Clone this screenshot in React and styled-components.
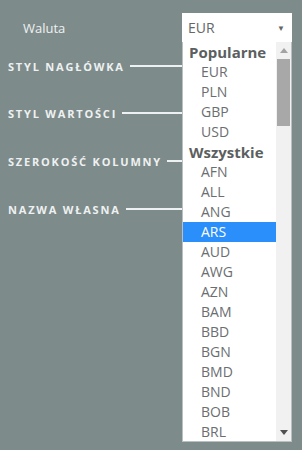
import React from "react";
import styled, { createGlobalStyle } from "styled-components";

const GlobalStyle = createGlobalStyle`
  html, body {
    margin: 0;
    padding: 0;
    background: #7e8b8b;
  }
  body {
    font-family: "Open Sans", "Liberation Sans", sans-serif;
  }
`;

const Page = styled.div`
  position: relative;
  width: 302px;
  height: 450px;
  overflow: hidden;
  background: #7e8b8b;
`;

const FieldRow = styled.div`
  display: flex;
  align-items: center;
  padding: 13px 0 0 23px;
  height: 29px;
`;

const FieldLabel = styled.div`
  width: 159px;
  font-size: 13px;
  color: #eef1f1;
`;

const Select = styled.div`
  box-sizing: border-box;
  width: 110px;
  height: 29px;
  background: #fff;
  display: flex;
  align-items: center;
  justify-content: space-between;
  padding: 0 7px 0 6px;
  font-size: 14px;
  color: #666;
`;

const Caret = styled.span`
  font-size: 8px;
  color: #666;
`;

const Notes = styled.div`
  display: flex;
  flex-direction: column;
  width: 182px;
`;

const Note = styled.div`
  display: flex;
  align-items: center;
  margin-top: ${(p) => p.$top}px;
  height: 14px;
`;

const NoteText = styled.span`
  padding-left: 8px;
  font-size: 11px;
  font-weight: 700;
  letter-spacing: 1.8px;
  color: #eef1f1;
  white-space: nowrap;
`;

const NoteLine = styled.span`
  flex: 1;
  height: 2px;
  margin-left: 5px;
  background: #eef1f1;
`;

const Dropdown = styled.div`
  position: absolute;
  left: 182px;
  top: 42px;
  width: 110px;
  height: 400px;
  box-sizing: border-box;
  display: flex;
  background: #fff;
  border: 1px solid #b9c0c0;
  border-top: none;
  overflow: hidden;
`;

const List = styled.div`
  flex: 1;
  display: flex;
  flex-direction: column;
`;

const Group = styled.div`
  height: 20px;
  line-height: 20px;
  padding-left: 6px;
  font-size: 15px;
  font-weight: 700;
  color: #5c5f60;
  flex-shrink: 0;
`;

const Option = styled.div`
  height: 20px;
  line-height: 20px;
  padding-left: 18px;
  font-size: 14px;
  flex-shrink: 0;
  color: ${(p) => (p.$active ? "#fff" : "#6b6e70")};
  background: ${(p) => (p.$active ? "#2a8ffb" : "transparent")};
`;

const Scrollbar = styled.div`
  width: 15px;
  background: #f1f1f1;
  display: flex;
  flex-direction: column;
  align-items: center;
`;

const Arrow = styled.div`
  height: 17px;
  display: flex;
  align-items: center;
  justify-content: center;
`;

const Thumb = styled.div`
  width: 13px;
  height: 67px;
  background: #a8a8a8;
`;

const Spacer = styled.div`
  flex: 1;
`;

const notes = [
  { text: "STYL NAGŁÓWKA", top: 17 },
  { text: "STYL WARTOŚCI", top: 33 },
  { text: "SZEROKOŚĆ KOLUMNY", top: 34 },
  { text: "NAZWA WŁASNA", top: 34 },
];

const popular = ["EUR", "PLN", "GBP", "USD"];
const all = ["AFN", "ALL", "ANG", "ARS", "AUD", "AWG", "AZN", "BAM", "BBD", "BGN", "BMD", "BND", "BOB", "BRL"];

const App = () => {
  return (
    <Page>
      <GlobalStyle />
      <FieldRow>
        <FieldLabel>Waluta</FieldLabel>
        <Select>
          EUR
          <Caret>▼</Caret>
        </Select>
      </FieldRow>

      <Notes>
        {notes.map((n) => (
          <Note key={n.text} $top={n.top}>
            <NoteText>{n.text}</NoteText>
            <NoteLine />
          </Note>
        ))}
      </Notes>

      <Dropdown>
        <List>
          <Group>Popularne</Group>
          {popular.map((c) => (
            <Option key={"p" + c}>{c}</Option>
          ))}
          <Group>Wszystkie</Group>
          {all.map((c) => (
            <Option key={c} $active={c === "ARS"}>
              {c}
            </Option>
          ))}
        </List>
        <Scrollbar>
          <Arrow>
            <svg width="8" height="5" viewBox="0 0 8 5">
              <path d="M0 5 L4 0 L8 5 Z" fill="#a3a3a3" />
            </svg>
          </Arrow>
          <Thumb />
          <Spacer />
          <Arrow>
            <svg width="8" height="5" viewBox="0 0 8 5">
              <path d="M0 0 L8 0 L4 5 Z" fill="#505050" />
            </svg>
          </Arrow>
        </Scrollbar>
      </Dropdown>
    </Page>
  );
};

export default App;
